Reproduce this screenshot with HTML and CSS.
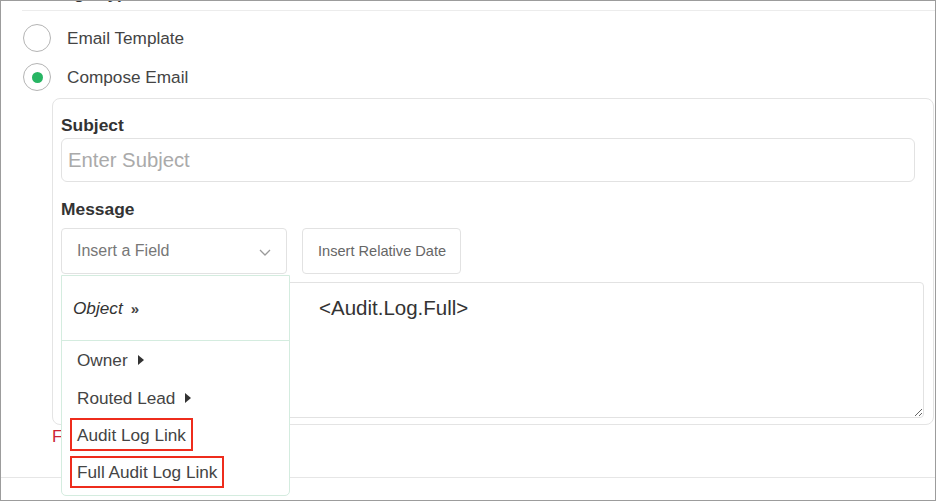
FILE: index.html
```html
<!DOCTYPE html>
<html>
<head>
<meta charset="utf-8">
<link rel="stylesheet" href="styles.css">
</head>
<body>
<div class="frame">
  <div class="section-head">Message Type</div>
  <div class="divider"></div>
  <div class="radio-row first">
    <span class="radio"></span>
    <span class="radio-label">Email Template</span>
  </div>
  <div class="radio-row">
    <span class="radio checked"><span class="dot"></span></span>
    <span class="radio-label">Compose Email</span>
  </div>
  <div class="compose">
    <div class="field-label">Subject</div>
    <input class="subject" type="text" placeholder="Enter Subject">
    <div class="field-label message-label">Message</div>
    <div class="toolbar">
      <div class="select">
        <span>Insert a Field</span>
        <svg class="chevron" width="12" height="7" viewBox="0 0 12 7"><polyline points="1,1 6,6 11,1" fill="none" stroke="#9a9a9a" stroke-width="1.3"/></svg>
      </div>
      <div class="btn">Insert Relative Date</div>
    </div>
    <textarea class="body-text" readonly>&lt;Audit.Log.Full&gt;</textarea>
  </div>
  <div class="error">Field required</div>
  <div class="bottom-line"></div>

  <div class="menu">
    <div class="menu-head"><span class="obj">Object</span><span class="raquo">»</span></div>
    <div class="menu-item">Owner <svg class="tri" width="6" height="10" viewBox="0 0 6 10"><path d="M0 0 L6 5 L0 10 Z" fill="#333"/></svg></div>
    <div class="menu-item">Routed Lead <svg class="tri" width="6" height="10" viewBox="0 0 6 10"><path d="M0 0 L6 5 L0 10 Z" fill="#333"/></svg></div>
    <div class="menu-mark first-mark"><span class="marked">Audit Log Link</span></div>
    <div class="menu-mark second-mark"><span class="marked">Full Audit Log Link</span></div>
  </div>
</div>
</body>
</html>
```

FILE: styles.css
```css
* { box-sizing: border-box; }
html, body { margin: 0; padding: 0; background: #fff; }
body { font-family: "Liberation Sans", Arial, sans-serif; color: #444; }

.frame {
  position: relative;
  width: 936px;
  height: 501px;
  border: 1px solid #9c9c9c;
  overflow: hidden;
  background: #fff;
}

.section-head {
  margin-top: -17px;
  padding-left: 21px;
  font-size: 17px;
  line-height: 20px;
  font-weight: bold;
  color: #333;
}

.divider {
  margin-top: 6px;
  margin-left: 21px;
  height: 1px;
  background: #ececec;
}

.radio-row {
  display: flex;
  align-items: center;
  height: 28px;
  margin-top: 11px;
  padding-left: 22px;
}
.radio-row.first { margin-top: 13px; }

.radio {
  width: 28px;
  height: 28px;
  border-radius: 50%;
  border: 1.5px solid #b4b4b4;
  display: flex;
  align-items: center;
  justify-content: center;
  flex: none;
}
.radio .dot {
  width: 11px;
  height: 11px;
  border-radius: 50%;
  background: #27b563;
}
.radio-label {
  margin-left: 16px;
  font-size: 17.2px;
  color: #444;
}

.compose {
  margin: 7px 1px 0 51px;
  border: 1px solid #e4e4e4;
  border-radius: 8px;
  padding: 16px 9px 6px 8px;
}

.field-label {
  font-size: 17.4px;
  line-height: 20px;
  font-weight: bold;
  color: #333;
  margin-bottom: 3px;
}
.message-label {
  margin-top: 17px;
  margin-bottom: 9px;
}

.subject {
  display: block;
  width: calc(100% - 9px);
  height: 44px;
  border: 1px solid #e2e2e2;
  border-radius: 6px;
  padding: 0 6px;
  font-family: "Liberation Sans", Arial, sans-serif;
  font-size: 20.3px;
  color: #333;
  outline: none;
}
.subject::placeholder { color: #aaa; }

.toolbar {
  display: flex;
  gap: 15px;
}
.select {
  width: 226px;
  height: 46px;
  border: 1px solid #e2e2e2;
  border-radius: 4px;
  padding: 0 15px 0 15px;
  display: flex;
  align-items: center;
  justify-content: space-between;
  font-size: 16px;
  color: #777;
}
.chevron { display: block; margin-top: 2px; }
.btn {
  width: 159px;
  height: 46px;
  border: 1px solid #e2e2e2;
  border-radius: 4px;
  padding-left: 15px;
  display: flex;
  align-items: center;
  font-size: 14.6px;
  color: #666;
}

.body-text {
  display: block;
  width: 100%;
  height: 136px;
  margin-top: 8px;
  border: 1px solid #e2e2e2;
  border-radius: 4px;
  padding: 14px 6px;
  font-family: "Liberation Sans", Arial, sans-serif;
  font-size: 20.5px;
  line-height: 22px;
  color: #333;
  text-indent: 251px;
  resize: both;
  outline: none;
}

.error {
  margin-left: 51px;
  margin-top: 2px;
  font-size: 17px;
  line-height: 20px;
  color: #cc2535;
}

.bottom-line {
  margin-top: 30px;
  height: 1px;
  background: #e6e6e6;
}

.menu {
  position: absolute;
  left: 60px;
  top: 274px;
  width: 229px;
  height: 221px;
  border: 1px solid #d4ecdf;
  border-radius: 0 0 5px 5px;
  background: #fff;
}
.menu-head {
  height: 65px;
  display: flex;
  align-items: center;
  padding-left: 11px;
  border-bottom: 1px solid #d4ecdf;
  color: #333;
}
.obj {
  font-style: italic;
  font-size: 17.2px;
}
.raquo {
  margin-left: 8px;
  font-size: 15px;
  font-weight: bold;
  color: #444;
}
.menu-item {
  height: 38px;
  display: flex;
  align-items: center;
  padding-left: 15px;
  font-size: 17.2px;
  color: #444;
}
.tri { margin-left: 10px; }
.menu-mark {
  padding-left: 8px;
}
.first-mark { margin-top: 1px; }
.second-mark { margin-top: 5px; }
.marked {
  display: inline-block;
  border: 2px solid #ee2c1c;
  padding: 5px 5px 4px 5px;
  font-size: 17.2px;
  line-height: 20px;
  color: #444;
}
.second-mark .marked { padding: 4px 5px 4px 5px; }
```
